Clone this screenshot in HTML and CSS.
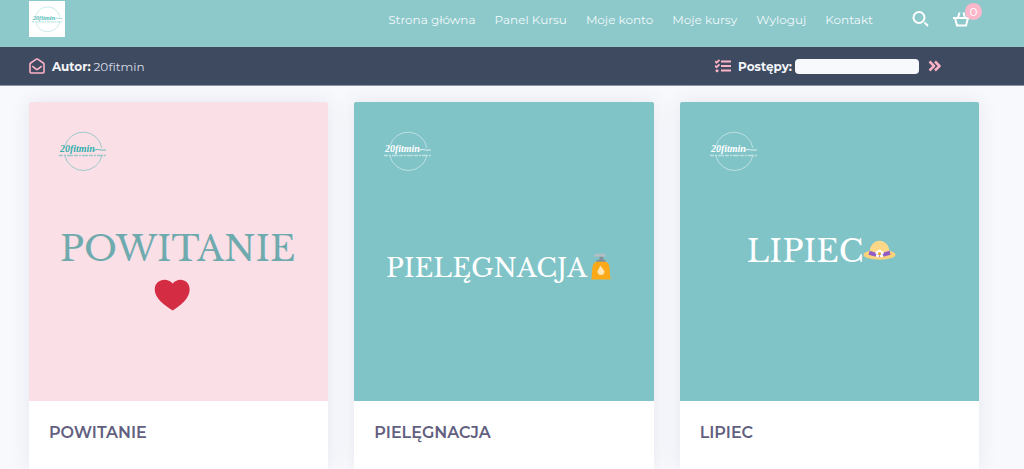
FILE: index.html
```html
<!DOCTYPE html>
<html lang="pl">
<head>
  <meta charset="UTF-8">
  <meta name="viewport" content="width=device-width, initial-scale=1.0">
  <title>20fitmin</title>
  <link rel="stylesheet" href="styles.css">
</head>
<body>
  <header class="header">
    <a class="brand" href="#" aria-label="20fitmin">
      <!-- the covers reuse #logo -->
      <svg class="brand-logo" viewBox="0 0 48 40">
        <g id="logo">
          <path class="logo-ring" d="M6 15A19 19 0 0 1 43 17M6 25A19 19 0 0 0 43 25" />
          <text class="logo-name" x="1" y="21">20fitmin</text>
          <path class="logo-swash" d="M35 20C38 17 40 20 47 19" />
          <path class="logo-tag" d="M0 24.500H47" />
        </g>
      </svg>
    </a>
    <nav class="menu">
      <a href="#">Strona główna</a>
      <a href="#">Panel Kursu</a>
      <a href="#">Moje konto</a>
      <a href="#">Moje kursy</a>
      <a href="#">Wyloguj</a>
      <a href="#">Kontakt</a>
    </nav>
    <div class="tools">
      <button class="tool" type="button" aria-label="Szukaj">
        <svg width="18" height="18" viewBox="0 0 18 18"><circle cx="7" cy="7.500" r="5.500" /><path d="M12.500 12.500L16 16" /></svg>
      </button>
      <a class="tool cart" href="#" aria-label="Koszyk">
        <svg width="18" height="18" viewBox="0 0 18 18"><path d="M0 8H17M2 8L4 15.500H13L15 8M5 8L6.500 2.500M12 8L10.500 2.500" /></svg>
        <span class="badge">0</span>
      </a>
    </div>
  </header>

  <div class="course-bar">
    <div class="author">
      <svg class="icon" width="16" height="16" viewBox="0 0 16 16"><path d="M1 6.200Q1 5.500 1.700 5L7 1.300Q8 .700 9 1.300L14.300 5Q15 5.500 15 6.200V14Q15 15 14 15H2Q1 15 1 14Z" /><path d="M3.200 8.200L7 11Q8 11.700 9 11L12.800 8.200" /></svg>
      <strong>Autor:</strong>
      <span>20fitmin</span>
    </div>
    <div class="progress">
      <svg class="icon list" width="16" height="14" viewBox="0 0 16 14"><path d="M6 2.500H16M6 7H16M6 11.500H16M0 2.300L1.600 3.700L4.500 .800M0 6.800L1.600 8.200L4.500 5.300" /><circle class="dot" cx="2" cy="11.700" r="1.500" /></svg>
      <label for="course-progress">Postępy:</label>
      <progress id="course-progress" value="0" max="100"></progress>
      <a class="next" href="#" aria-label="Dalej">
        <svg class="icon thick" width="13" height="12" viewBox="0 0 13 12"><path d="M1.500 1.500L6 6L1.500 10.500M7 1.500L11.500 6L7 10.500" /></svg>
      </a>
    </div>
  </div>

  <main class="modules">
    <article class="card">
      <svg class="cover cover-pink" viewBox="0 0 300 300">
        <use class="cover-logo" href="#logo" x="30" y="29" />
        <text x="149" y="159" font-size="35" text-anchor="middle">POWITANIE</text>
        <path fill="#d42c43" d="M144 182C150 175 161 178 161 188C161 197 152 204 144 209C136 204 126 197 126 188C126 178 138 175 144 182Z" />
      </svg>
      <h2>POWITANIE</h2>
    </article>

    <article class="card">
      <svg class="cover" viewBox="0 0 300 300">
        <use class="cover-logo" href="#logo" x="30" y="29" />
        <text x="32" y="175" font-size="26">PIELĘGNACJA</text>
        <path fill="#b3bec5" d="M240 154Q241 152 245 152H252V155H241Z" />
        <path fill="#82909b" d="M246 155H250V158H252V161H243V158H246Z" />
        <path fill="#fba919" d="M239 165Q240 160 244 160H251Q255 160 256 165L257 178H238Z" />
        <path fill="#fde7b8" d="M247 164Q251 169 251 170A3.500 3.500 0 0 1 244 170Q244 169 247 164Z" />
      </svg>
      <h2>PIELĘGNACJA</h2>
    </article>

    <article class="card">
      <svg class="cover" viewBox="0 0 300 300">
        <use class="cover-logo" href="#logo" x="30" y="29" />
        <text x="67" y="160" font-size="31">LIPIEC</text>
        <ellipse fill="#fad27b" cx="200" cy="153" rx="16" ry="5" />
        <path fill="#fdd888" d="M190 151C190 135 210 135 210 151Z" />
        <path fill="#925dc4" d="M190 149Q200 153 210 149L211 153Q200 157 189 153Z" />
        <g fill="#fff">
          <circle cx="200" cy="149.500" r="1.700" /><circle cx="202.500" cy="151" r="1.700" /><circle cx="202" cy="154" r="1.700" />
          <circle cx="198" cy="154" r="1.700" /><circle cx="197.500" cy="151" r="1.700" />
        </g>
        <circle fill="#f5a623" cx="200" cy="152" r="1.500" />
      </svg>
      <h2>LIPIEC</h2>
    </article>
  </main>
</body>
</html>
```
FILE: styles.css
```css
* {
  box-sizing: border-box;
}
body {
  display: flex;
  flex-direction: column;
  min-height: 100vh;
  margin: 0;
  background: #f8f9fd;
  color: #625f80;
  font-family: Montserrat, Inter, "Liberation Sans", sans-serif;
  font-size: 12px;
}
a {
  color: inherit;
  text-decoration: none;
}

/* logo */
.logo-ring, .logo-swash, .logo-tag {
  fill: none;
  stroke: currentColor;
  stroke-width: .8;
}
.logo-ring {
  opacity: .6;
}
.logo-tag {
  stroke-width: 1.5;
  stroke-dasharray: 4 1 2 1 6 1;
  opacity: .5;
}
.logo-name {
  fill: currentColor;
  font: italic bold 10px "Liberation Serif", serif;
}

/* header */
.header {
  display: flex;
  align-items: center;
  height: 47px;
  padding: 0 42px 9px 29px;
  background: #8dc8cb;
  color: #fff;
}
.brand {
  display: flex;
  align-items: center;
  justify-content: center;
  width: 36px;
  height: 36px;
  margin-right: auto;
  background: #fff;
  color: #55bdb9;
}
.brand-logo {
  width: 31px;
  height: 26px;
}
.menu {
  display: flex;
  gap: 19px;
  color: #f0f9f9;
}
.tools {
  display: flex;
  gap: 23px;
  margin-left: 39px;
}
.tool {
  display: flex;
  padding: 0;
  border: 0;
  background: none;
}
.tool svg {
  fill: none;
  stroke: #fff;
  stroke-width: 2;
}
.cart {
  position: relative;
  margin-right: 11px;
}
.badge {
  position: absolute;
  top: -7px;
  right: -11px;
  width: 17px;
  border-radius: 50%;
  background: #fbb8cb;
  color: #fff;
  line-height: 17px;
  text-align: center;
}

/* course bar */
.course-bar {
  display: flex;
  justify-content: space-between;
  align-items: center;
  height: 39px;
  padding: 0 83px 0 29px;
  border-bottom: 1px solid #8f93a8;
  background: #3e4a60;
  color: #f3f5f9;
}
.author, .progress {
  display: flex;
  align-items: center;
}
.author strong {
  margin: 0 3px 0 7px;
}
.author span {
  color: #d9dde6;
}
.icon {
  fill: none;
  stroke: #fbb1c6;
  stroke-width: 1.6;
  stroke-linejoin: round;
}
.icon.list {
  stroke-width: 1.8;
}
.icon.thick {
  stroke-width: 2.5;
}
.icon .dot {
  fill: #fbb1c6;
  stroke: none;
}
.progress label {
  margin: 0 3px 0 7px;
  font-weight: 700;
}
progress {
  width: 124px;
  height: 15px;
  border: 0;
  border-radius: 4px;
  background: #f8f9fd;
  appearance: none;
  overflow: hidden;
}
progress::-webkit-progress-bar {
  background: #f8f9fd;
}
progress::-webkit-progress-value {
  background: #fbb1c6;
}
.next {
  display: flex;
  margin-left: 9px;
}

/* modules */
.modules {
  display: grid;
  flex: 1;
  grid-template-columns: repeat(3, 1fr);
  gap: 26px;
  padding: 16px 45px 0 29px;
}
.card {
  background: #fff;
  border-radius: 2px 2px 0 0;
  box-shadow: 0 0 20px rgba(62, 74, 96, .1);
}
.cover {
  display: block;
  width: 100%;
  border-radius: 2px 2px 0 0;
  background: #80c4c8;
  color: #fff;
}
.cover text {
  fill: #fff;
  font-family: "Libre Baskerville", "Liberation Serif", serif;
}
.cover-pink {
  background: #fbdfe6;
}
.cover-pink text {
  fill: #6faaae;
}
.cover-pink .cover-logo {
  color: #35b0ad;
}
.card h2 {
  margin: 0;
  padding: 20px;
  font-size: 16px;
  font-weight: 600;
  line-height: 24px;
}
```
